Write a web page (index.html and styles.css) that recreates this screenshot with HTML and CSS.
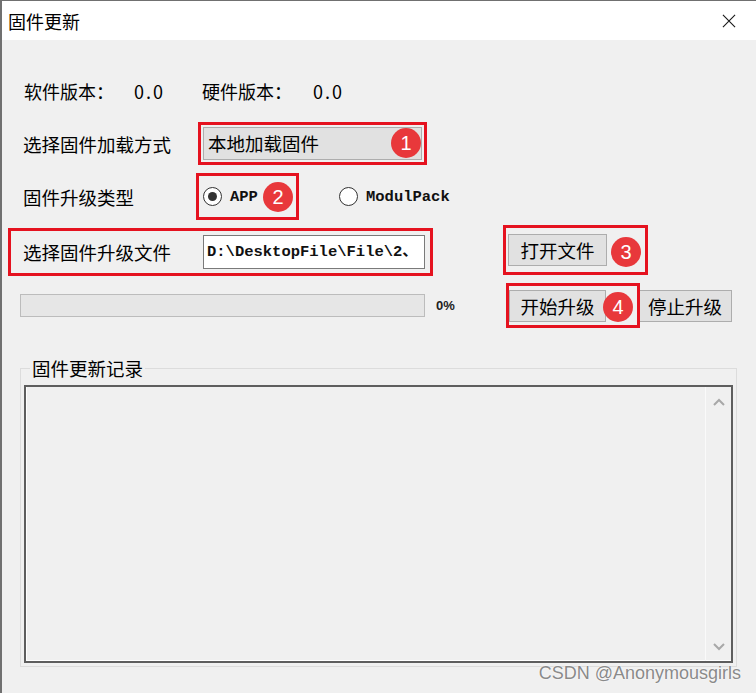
FILE: index.html
```html
<!DOCTYPE html>
<html lang="zh-CN">
<head>
  <meta charset="UTF-8" />
  <title>固件更新</title>
  <link rel="stylesheet" href="styles.css">
</head>
<body>
  <div class="window">
    <div class="titlebar">
      <span>固件更新</span>
      <svg class="close" viewBox="0 0 15 15"><path d="M1 1 L14 14 M14 1 L1 14" stroke="#1a1a1a" stroke-width="1.2" fill="none"/></svg>
    </div>

    <div class="row version">
      <span class="v-label">软件版本：</span>
      <span class="v-value">0.0</span>
      <span class="v-label second">硬件版本：</span>
      <span class="v-value">0.0</span>
    </div>

    <div class="row load">
      <span class="label load-label">选择固件加载方式</span>
      <div class="mark mark-load">
        <div class="combo">本地加载固件</div>
        <span class="badge b1">1</span>
      </div>
    </div>

    <div class="row type">
      <span class="label type-label">固件升级类型</span>
      <div class="mark mark-type">
        <span class="radio on"></span>
        <span class="mono">APP</span>
        <span class="badge b2">2</span>
      </div>
      <span class="radio second-radio"></span>
      <span class="mono">ModulPack</span>
    </div>

    <div class="row file">
      <div class="mark mark-file">
        <span class="label file-label">选择固件升级文件</span>
        <div class="input mono">D:\DesktopFile\File\2、</div>
      </div>
      <div class="mark mark-open">
        <button class="btn open-btn">打开文件</button>
        <span class="badge b3">3</span>
      </div>
    </div>

    <div class="row progress-row">
      <div class="progress"></div>
      <span class="percent">0%</span>
      <div class="mark mark-start">
        <button class="btn start-btn">开始升级</button>
        <span class="badge b4">4</span>
      </div>
      <button class="btn stop-btn">停止升级</button>
    </div>

    <fieldset class="log">
      <legend>固件更新记录</legend>
      <div class="listbox">
        <div class="list-area"></div>
        <div class="scrollbar">
          <svg viewBox="0 0 12 8"><polyline points="1,7 6,2 11,7" stroke="#a8a8a8" stroke-width="2" fill="none"/></svg>
          <svg viewBox="0 0 12 8"><polyline points="1,1 6,6 11,1" stroke="#a8a8a8" stroke-width="2" fill="none"/></svg>
        </div>
      </div>
    </fieldset>

    <div class="watermark">CSDN @Anonymousgirls</div>
  </div>
</body>
</html>
```

FILE: styles.css
```css
* { box-sizing: border-box; }
body {
  margin: 0;
  background: #f0f0f0;
  font-family: "Noto Sans CJK SC", "Noto Sans", sans-serif;
  color: #000;
}
.window {
  position: relative;
  width: 756px;
  height: 693px;
  border-left: 2px solid #707070;
  border-top: 1px solid #707070;
  overflow: hidden;
}
.titlebar {
  height: 39px;
  background: #fff;
  display: flex;
  align-items: center;
  padding-left: 6px;
  font-size: 18px;
  line-height: 22px;
}
.close { margin-left: auto; margin-right: 20px; width: 14px; height: 14px; }

.row { display: flex; align-items: center; }
.label { font-size: 18.5px; line-height: 24px; flex: none; }

.version { margin-top: 36px; height: 30px; padding-left: 22px; font-size: 18px; line-height: 22px; }
.v-label { width: 110px; }
.v-label.second { width: 111px; }
.v-value { width: 68px; letter-spacing: 2px; }

.mark { position: relative; border: 3px solid #e5121f; display: flex; align-items: center; flex: none; }
.badge {
  position: absolute;
  width: 30px; height: 30px;
  border-radius: 50%;
  background: #e8383b;
  color: #fff;
  font-family: "Liberation Sans", Arial, sans-serif;
  font-size: 20px;
  line-height: 30px;
  text-align: center;
}

.load { margin-top: 16px; height: 43px; padding-left: 21px; }
.load-label { width: 175px; }
.mark-load { width: 229px; height: 43px; padding: 2px; }
.combo {
  width: 100%; height: 100%;
  background: #e1e1e1;
  border: 1px solid #adadad;
  padding-left: 4px;
  font-size: 18.5px;
  line-height: 30px;
}
.b1 { left: 190px; top: 3px; }

.type { margin-top: 8px; height: 47px; padding-left: 21px; }
.type-label { width: 173px; }
.mark-type { width: 103px; height: 47px; padding-left: 4px; }
.radio {
  width: 19px; height: 19px;
  border-radius: 50%;
  border: 1px solid #333;
  background: #fff;
  display: flex; align-items: center; justify-content: center;
  flex: none;
}
.radio.on::after { content: ""; width: 9px; height: 9px; border-radius: 50%; background: #333; }
.mono {
  font-family: "Liberation Mono", "Noto Sans CJK SC", monospace;
  font-weight: bold;
  font-size: 15.5px;
  color: #111;
}
.mark-type .mono { margin-left: 8px; }
.b2 { left: 64px; top: 6px; }
.second-radio { margin-left: 40px; margin-right: 8px; }

.file { margin-top: 5px; height: 51px; padding-left: 6px; align-items: flex-start; }
.mark-file { margin-top: 3px; width: 425px; height: 48px; padding-left: 12px; }
.file-label { width: 180px; }
.input {
  width: 222px; height: 34px;
  background: #fff;
  border: 1px solid #7a7a7a;
  padding-left: 3px;
  line-height: 32px;
  white-space: nowrap;
  overflow: hidden;
}
.mark-open { margin-left: 70px; width: 145px; height: 50px; padding-left: 2px; }
.btn {
  background: #e1e1e1;
  border: 1px solid #adadad;
  font-family: "Noto Sans CJK SC", sans-serif;
  font-size: 18.5px;
  line-height: 28px;
  padding: 0;
  color: #000;
  flex: none;
}
.open-btn { width: 99px; height: 32px; }
.b3 { left: 105px; top: 9px; }

.progress-row { margin-top: 7px; height: 45px; padding-left: 18px; }
.progress { width: 405px; height: 23px; background: #e6e6e6; border: 1px solid #bcbcbc; }
.percent {
  width: 81px;
  padding-left: 11px;
  font-family: "Liberation Sans", Arial, sans-serif;
  font-size: 13px;
  font-weight: bold;
  color: #222;
}
.mark-start { width: 134px; height: 45px; }
.start-btn { width: 97px; height: 32px; }
.b4 { left: 94px; top: 6px; }
.stop-btn { width: 94px; height: 32px; margin-left: -2px; }

.log {
  margin: 30px 0 0 18px;
  width: 717px;
  height: 309px;
  border: 1px solid #dcdcdc;
  padding: 0 3px 3px 3px;
}
.log legend {
  margin-left: 6px;
  padding: 0 2px;
  font-size: 18.5px;
  line-height: 20px;
}
.listbox {
  margin-top: 7px;
  height: 278px;
  border: 2px solid #5e5e5e;
  display: flex;
  box-shadow: inset 1px -1px 0 #fff;
}
.list-area { flex: 1; }
.scrollbar {
  width: 26px;
  border-left: 1px solid #fafafa;
  display: flex;
  flex-direction: column;
  justify-content: space-between;
  align-items: center;
  padding: 11px 0 10px;
}
.scrollbar svg { width: 12px; height: 8px; }

.watermark {
  position: absolute;
  right: 15px;
  bottom: 9px;
  font-family: "Liberation Sans", Arial, sans-serif;
  font-size: 18px;
  color: #8a8a8a;
  text-shadow: 0 0 1px #fff, 0 0 2px #fff;
}
```
